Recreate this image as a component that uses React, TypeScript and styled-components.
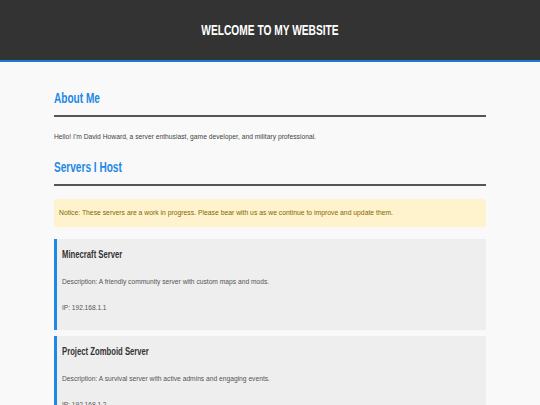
import React from 'react';
import styled, { createGlobalStyle } from 'styled-components';

const GlobalStyle = createGlobalStyle`
  html, body {
    margin: 0;
    padding: 0;
    background: #f9f9f9;
    font-family: "Liberation Sans", Arial, sans-serif;
    color: #444;
  }
`;

// the reference uses a narrow face; squeeze the glyphs horizontally
const Narrow = styled.span<{ $x: number; $center?: boolean }>`
  display: inline-block;
  white-space: nowrap;
  transform: scaleX(${p => p.$x});
  transform-origin: ${p => (p.$center ? 'center' : 'left')} center;
`;

const Header = styled.header`
  height: 60px;
  background: #333;
  border-bottom: 2px solid #2079d0;
  display: flex;
  align-items: center;
  justify-content: center;
`;

const SiteTitle = styled.h1`
  margin: 0;
  font-size: 15px;
  line-height: 18px;
  font-weight: bold;
  color: #fff;
`;

const Main = styled.main`
  width: 80%;
  margin: 0 auto;
  padding-top: 28px;
`;

const SectionTitle = styled.h2<{ $first?: boolean }>`
  margin: ${p => (p.$first ? '0' : '17px')} 0 0;
  padding-bottom: 9px;
  border-bottom: 2px solid #555;
  font-size: 14px;
  line-height: 16px;
  color: #1e88e5;
`;

const Text = styled.p`
  margin: 15px 0 0;
  font-size: 8px;
  line-height: 10px;
  color: #444;
`;

const Notice = styled.div`
  margin-top: 13px;
  padding: 9px 5px;
  background: #fff3cd;
  color: #856404;
  border-radius: 3px;
  font-size: 8px;
  line-height: 10px;
`;

const ServerList = styled.div`
  margin-top: 12px;
  display: flex;
  flex-direction: column;
  gap: 6px;
`;

const ServerCard = styled.section`
  background: #eee;
  border-left: 3px solid #1e88e5;
  padding: 10px 5px 17px;
`;

const ServerName = styled.h3`
  margin: 0;
  font-size: 10px;
  line-height: 12px;
  font-weight: bold;
  color: #333;
`;

const ServerLine = styled.p`
  margin: 16px 0 0;
  font-size: 8px;
  line-height: 10px;
  color: #555;
`;

const servers = [
  {
    name: 'Minecraft Server',
    description: 'A friendly community server with custom maps and mods.',
    ip: '192.168.1.1',
  },
  {
    name: 'Project Zomboid Server',
    description: 'A survival server with active admins and engaging events.',
    ip: '192.168.1.2',
  },
];

export default function App() {
  return (
    <>
      <GlobalStyle />
      <Header>
        <SiteTitle>
          <Narrow $x={0.68} $center>WELCOME TO MY WEBSITE</Narrow>
        </SiteTitle>
      </Header>
      <Main>
        <SectionTitle $first>
          <Narrow $x={0.72}>About Me</Narrow>
        </SectionTitle>
        <Text>
          <Narrow $x={0.84}>
            Hello! I'm David Howard, a server enthusiast, game developer, and military professional.
          </Narrow>
        </Text>
        <SectionTitle>
          <Narrow $x={0.72}>Servers I Host</Narrow>
        </SectionTitle>
        <Notice>
          <Narrow $x={0.85}>
            Notice: These servers are a work in progress. Please bear with us as we continue to improve and update them.
          </Narrow>
        </Notice>
        <ServerList>
          {servers.map(s => (
            <ServerCard key={s.name}>
              <ServerName>
                <Narrow $x={0.77}>{s.name}</Narrow>
              </ServerName>
              <ServerLine>
                <Narrow $x={0.835}>Description: {s.description}</Narrow>
              </ServerLine>
              <ServerLine>
                <Narrow $x={0.82}>IP: {s.ip}</Narrow>
              </ServerLine>
            </ServerCard>
          ))}
        </ServerList>
      </Main>
    </>
  );
}
